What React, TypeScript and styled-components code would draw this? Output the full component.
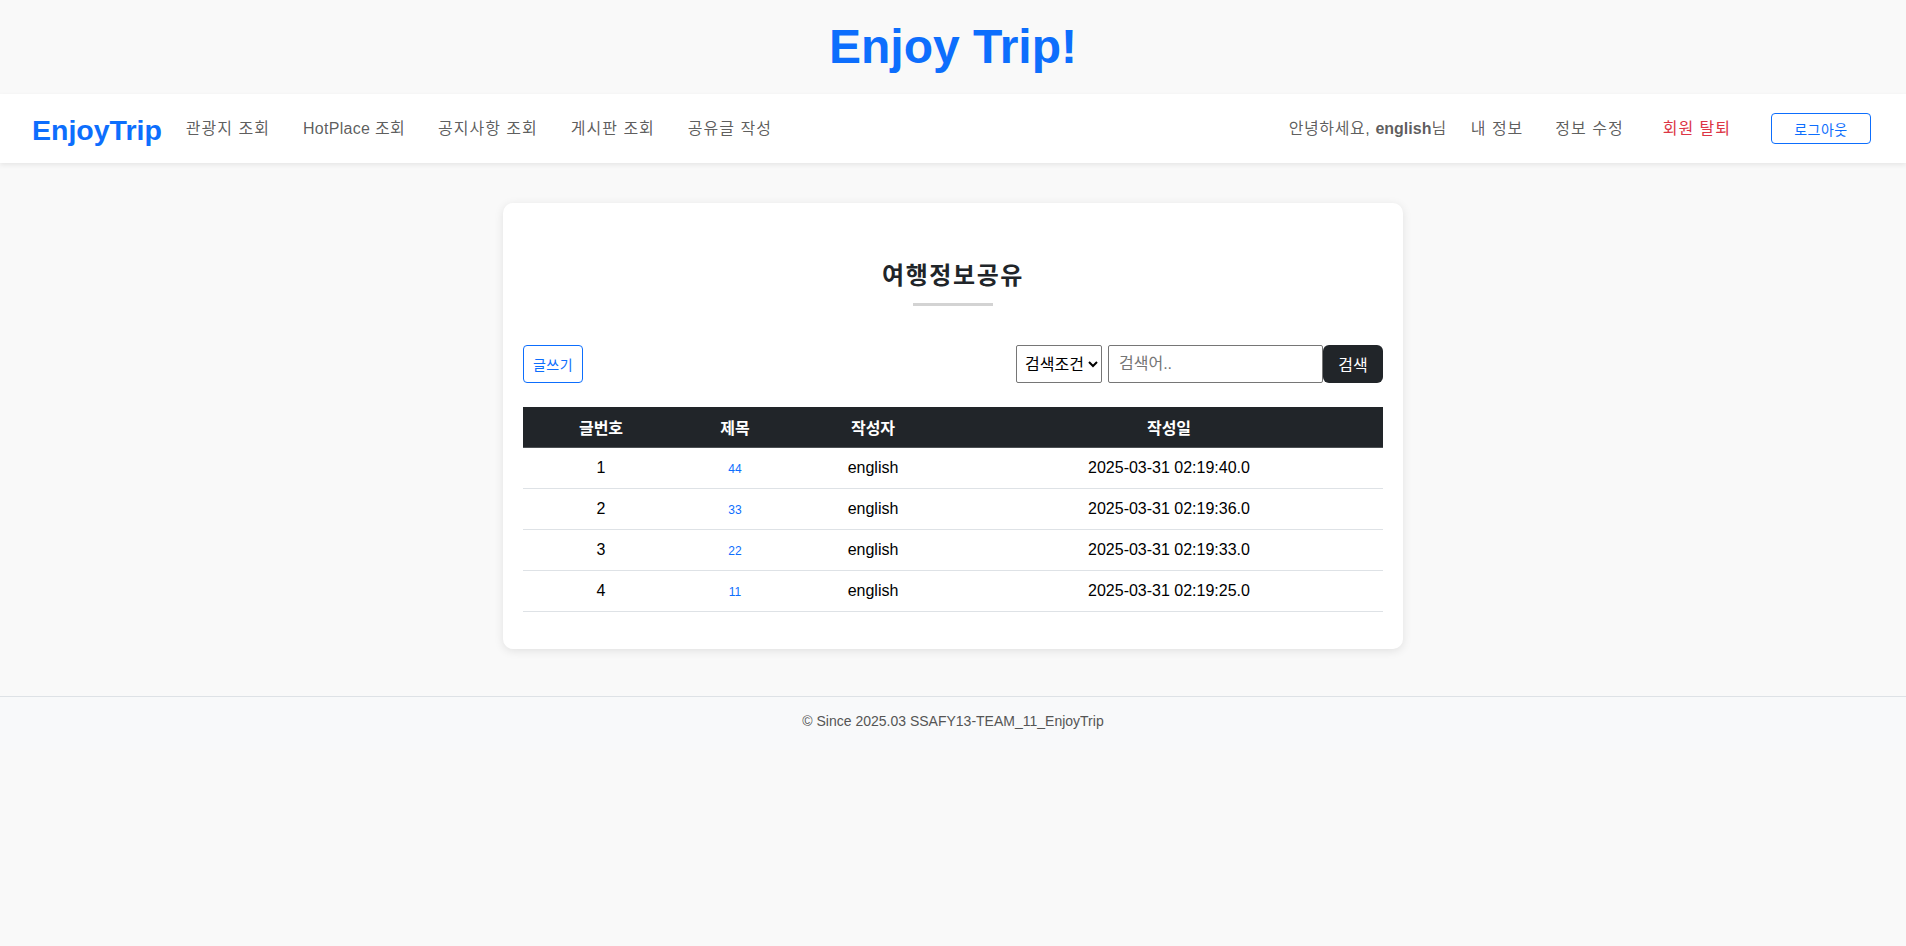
import React from 'react';
import styled, { createGlobalStyle } from 'styled-components';

const GlobalStyle = createGlobalStyle({
  'html, body': {
    margin: 0,
    padding: 0,
    background: '#f9f9f9',
    fontFamily: '"Liberation Sans", Arial, "Noto Sans CJK KR", sans-serif',
    fontSize: 16,
    color: '#212529',
  },
  '*': {
    boxSizing: 'border-box',
  },
});

const TopBanner = styled.header({
  height: 94,
  display: 'flex',
  alignItems: 'center',
  justifyContent: 'center',
});

const BannerTitle = styled.h1({
  margin: 0,
  fontSize: 48,
  fontWeight: 700,
  lineHeight: '56px',
  color: '#0d6efd',
});

const NavBar = styled.nav({
  height: 69,
  background: '#fff',
  boxShadow: '0 2px 5px rgba(0, 0, 0, 0.08)',
  display: 'flex',
  alignItems: 'center',
  padding: '0 35px 0 32px',
  position: 'relative',
});

const Brand = styled.a({
  fontSize: 28.5,
  fontWeight: 700,
  color: '#0d6efd',
  textDecoration: 'none',
  marginRight: 24,
  lineHeight: '32px',
  marginTop: 3,
});

const NavList = styled.div({
  display: 'flex',
  alignItems: 'center',
  gap: 33,
  flexGrow: 1,
});

const NavLink = styled.a<{ $danger?: boolean; $space?: number; $track?: number }>(props => ({
  fontSize: 16,
  lineHeight: '24px',
  color: props.$danger ? '#dc3545' : 'rgba(0, 0, 0, 0.65)',
  textDecoration: 'none',
  whiteSpace: 'nowrap',
  letterSpacing: props.$track ?? 1,
  marginLeft: props.$space ?? 0,
}));

const UserArea = styled.div({
  display: 'flex',
  alignItems: 'center',
});

const Greeting = styled.span({
  fontSize: 16,
  lineHeight: '24px',
  color: 'rgba(0, 0, 0, 0.65)',
  whiteSpace: 'nowrap',
  letterSpacing: 0.6,
  '& b': {
    fontWeight: 700,
    letterSpacing: 0,
  },
});

const OutlineButton = styled.button<{ $height: number; $width: number }>(props => ({
  height: props.$height,
  width: props.$width,
  padding: 0,
  border: '1px solid #0d6efd',
  borderRadius: 4,
  background: '#fff',
  color: '#0d6efd',
  fontSize: 14,
  letterSpacing: 0.5,
  fontFamily: 'inherit',
  cursor: 'pointer',
}));

const Main = styled.main({
  padding: '40px 0 47px',
});

const Card = styled.section({
  width: 900,
  margin: '0 auto',
  background: '#fff',
  borderRadius: 10,
  boxShadow: '0 2px 10px rgba(0, 0, 0, 0.1)',
  padding: '20px 20px 20px',
});

const Heading = styled.div({
  display: 'flex',
  flexDirection: 'column',
  alignItems: 'center',
  marginTop: 38,
});

const HeadingText = styled.h2({
  margin: 0,
  fontSize: 24,
  fontWeight: 700,
  lineHeight: '30px',
  letterSpacing: 1.6,
  color: '#212529',
});

const HeadingBar = styled.div({
  width: 80,
  height: 3,
  background: '#d3d3d3',
  marginTop: 12,
});

const Toolbar = styled.div({
  display: 'flex',
  justifyContent: 'space-between',
  alignItems: 'center',
  marginTop: 39,
});

const SearchForm = styled.form({
  display: 'flex',
  alignItems: 'center',
});

const Select = styled.select({
  height: 38,
  width: 86,
  fontSize: 16,
  fontFamily: 'inherit',
  color: '#000',
  border: '1px solid #767676',
  borderRadius: 2,
  background: '#fff',
  marginRight: 6,
  padding: '0 0 0 4px',
});

const SearchInput = styled.input({
  height: 38,
  width: 215,
  fontSize: 16,
  fontFamily: 'inherit',
  border: '1px solid #767676',
  borderRadius: 2,
  padding: '0 10px',
  '&::placeholder': {
    color: '#757575',
  },
});

const DarkButton = styled.button({
  height: 38,
  width: 60,
  border: 'none',
  borderRadius: 6,
  background: '#212529',
  color: '#fff',
  fontSize: 16,
  fontFamily: 'inherit',
  cursor: 'pointer',
});

const Table = styled.table({
  width: '100%',
  borderCollapse: 'collapse',
  marginTop: 24,
  marginBottom: 17,
  tableLayout: 'fixed',
});

const HeadCell = styled.th<{ $width?: number }>(props => ({
  width: props.$width,
  height: 40,
  background: '#212529',
  color: '#fff',
  fontWeight: 700,
  fontSize: 16,
  textAlign: 'center',
  borderBottom: '1px solid #4d5154',
  padding: 0,
}));

const Cell = styled.td({
  height: 41,
  textAlign: 'center',
  fontSize: 16,
  color: '#000',
  borderBottom: '1px solid #dee2e6',
  padding: 0,
});

const TitleLink = styled.a({
  fontSize: 12,
  color: '#0d6efd',
  textDecoration: 'none',
});

const Footer = styled.footer({
  background: '#f8f9fa',
  borderTop: '1px solid #dee2e6',
  padding: '15px 0 20px',
  textAlign: 'center',
  fontSize: 14,
  lineHeight: '18px',
  color: '#555',
});

const posts = [
  { no: 1, title: '44', writer: 'english', date: '2025-03-31 02:19:40.0' },
  { no: 2, title: '33', writer: 'english', date: '2025-03-31 02:19:36.0' },
  { no: 3, title: '22', writer: 'english', date: '2025-03-31 02:19:33.0' },
  { no: 4, title: '11', writer: 'english', date: '2025-03-31 02:19:25.0' },
];

const App = () => {
  return (
    <>
      <GlobalStyle />
      <TopBanner>
        <BannerTitle>Enjoy Trip!</BannerTitle>
      </TopBanner>
      <NavBar>
        <Brand href="#">EnjoyTrip</Brand>
        <NavList>
          <NavLink href="#">관광지 조회</NavLink>
          <NavLink href="#" $track={0.3}>HotPlace 조회</NavLink>
          <NavLink href="#">공지사항 조회</NavLink>
          <NavLink href="#">게시판 조회</NavLink>
          <NavLink href="#">공유글 작성</NavLink>
        </NavList>
        <UserArea>
          <Greeting>
            안녕하세요, <b>english</b>님
          </Greeting>
          <NavLink href="#" $space={24}>내 정보</NavLink>
          <NavLink href="#" $space={32}>정보 수정</NavLink>
          <NavLink href="#" $danger $space={39}>회원 탈퇴</NavLink>
          <OutlineButton $height={31} $width={100} style={{ marginLeft: 40 }}>
            로그아웃
          </OutlineButton>
        </UserArea>
      </NavBar>
      <Main>
        <Card>
          <Heading>
            <HeadingText>여행정보공유</HeadingText>
            <HeadingBar />
          </Heading>
          <Toolbar>
            <OutlineButton $height={38} $width={60}>
              글쓰기
            </OutlineButton>
            <SearchForm onSubmit={e => e.preventDefault()}>
              <Select defaultValue="">
                <option value="">검색조건</option>
                <option value="title">제목</option>
                <option value="writer">작성자</option>
              </Select>
              <SearchInput placeholder="검색어.." />
              <DarkButton type="submit">검색</DarkButton>
            </SearchForm>
          </Toolbar>
          <Table>
            <thead>
              <tr>
                <HeadCell $width={156}>글번호</HeadCell>
                <HeadCell $width={112}>제목</HeadCell>
                <HeadCell $width={164}>작성자</HeadCell>
                <HeadCell>작성일</HeadCell>
              </tr>
            </thead>
            <tbody>
              {posts.map(post => (
                <tr key={post.no}>
                  <Cell>{post.no}</Cell>
                  <Cell>
                    <TitleLink href="#">{post.title}</TitleLink>
                  </Cell>
                  <Cell>{post.writer}</Cell>
                  <Cell>{post.date}</Cell>
                </tr>
              ))}
            </tbody>
          </Table>
        </Card>
      </Main>
      <Footer>© Since 2025.03 SSAFY13-TEAM_11_EnjoyTrip</Footer>
    </>
  );
};

export default App;
